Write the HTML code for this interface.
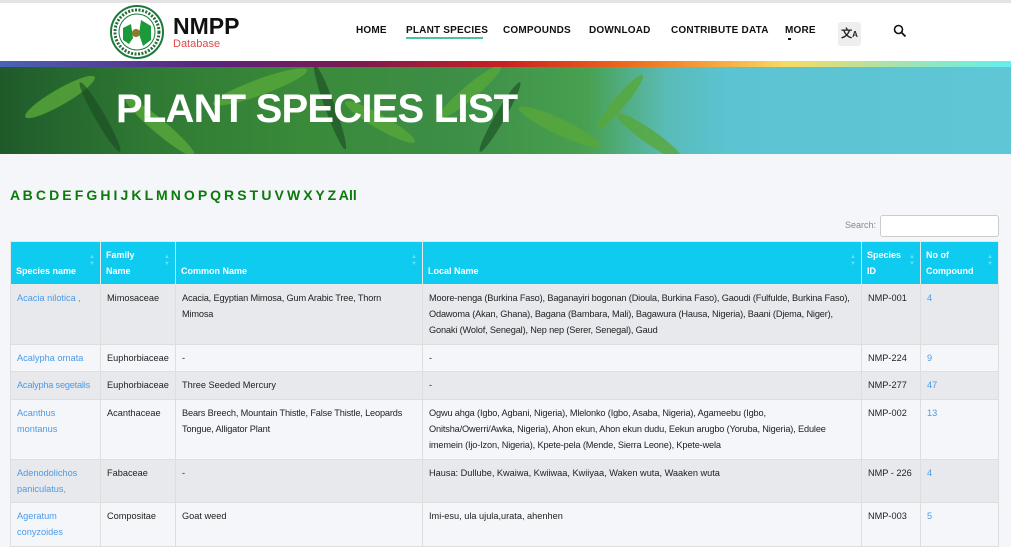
<!DOCTYPE html>
<html><head><meta charset="utf-8"><style>
*{margin:0;padding:0;box-sizing:border-box}
body{width:1011px;height:544px;overflow:hidden;background:#f5f6fa;font-family:"Liberation Sans",sans-serif;position:relative}
.hdr{position:absolute;left:0;top:0;width:1011px;height:61px;background:#fff;border-top:3px solid #e4e4e4}
.bar{position:absolute;left:0;top:61px;width:1011px;height:6px;background:linear-gradient(90deg,#4a63b8,#5a2480 20%,#7a1a50 35%,#cc2020 50%,#ee6a1c 62%,#f6b040 72%,#f7dc62 78%,#a9e3a8 88%,#5ff0f0)}
.nav{position:absolute;top:25px;font-size:10px;font-weight:bold;color:#111;letter-spacing:.2px}
.banner{position:absolute;left:0;top:67px;width:1011px;height:87px;background:linear-gradient(90deg,#1f5a2a 0%,#2f7a34 15%,#3a8a3a 30%,#3d8e46 45%,#48a050 58%,#5abcb8 66%,#5bc3d2 72%,#5ec6d4 100%);overflow:hidden}
.banner h1{position:absolute;left:116px;top:20px;color:#fff;font-size:40px;font-weight:900;letter-spacing:-0.8px;font-family:"Liberation Sans",sans-serif;white-space:nowrap}
.alpha{position:absolute;left:10px;top:187px;font-size:14px;font-weight:bold;color:#0b7a0b;letter-spacing:.1px;word-spacing:-1px}
table{position:absolute;left:10px;top:241px;width:988px;border-collapse:collapse;table-layout:fixed;font-size:9.2px;line-height:16px;color:#222}
th{background:#0ecbef;color:#fff;text-align:left;vertical-align:bottom;padding:0 5px 5px;border:1px solid #e8e8e8;font-size:9px;position:relative;line-height:16px}
th:after{content:"▲\A▼";white-space:pre;position:absolute;right:5px;top:12px;font-size:6px;line-height:7px;color:#6fdcf3}
td{vertical-align:top;padding:5px 6px 0;border:1px solid #dedede;overflow:hidden}
td.n{white-space:nowrap;letter-spacing:-0.15px}
tr.o td{background:#e8e9ed}tr.e td{background:#f5f6fa}
a{color:#4a9ae8;text-decoration:none}
</style></head><body>
<div class="hdr"></div>
<svg style="position:absolute;left:109px;top:4px" width="56" height="56" viewBox="0 0 56 56"><circle cx="28" cy="28" r="26" fill="#fff" stroke="#1a7a3a" stroke-width="2"/><circle cx="28" cy="28" r="18" fill="#fff" stroke="#1a7a3a" stroke-width="1"/><path d="M14 24 L22 20 L24 34 L20 40 L14 36Z" fill="#1a9a3a"/><path d="M32 16 L42 22 L42 36 L34 42 L30 30Z" fill="#1a9a3a"/><circle cx="27" cy="29" r="4" fill="#8a7a2a"/><circle cx="28" cy="28" r="22" fill="none" stroke="#2a6a3a" stroke-width="3" stroke-dasharray="2 1.5"/></svg>
<div style="position:absolute;left:173px;top:13px;font-size:23px;font-weight:bold;color:#111">NMPP</div>
<div style="position:absolute;left:173px;top:38px;font-size:11px;color:#e04a4a">Database</div>
<div class="nav" style="left:356px">HOME</div>
<div class="nav" style="left:406px">PLANT SPECIES</div>
<div style="position:absolute;left:406px;top:37px;width:77px;height:2px;background:#4cc29a"></div>
<div class="nav" style="left:503px">COMPOUNDS</div>
<div class="nav" style="left:589px">DOWNLOAD</div>
<div class="nav" style="left:671px">CONTRIBUTE DATA</div>
<div class="nav" style="left:785px">MORE</div>
<div style="position:absolute;left:788px;top:38px;width:3px;height:2px;background:#111"></div>
<div style="position:absolute;left:838px;top:22px;width:23px;height:24px;background:#eee;border-radius:3px;font-size:11px;font-weight:bold;text-align:center;line-height:24px;color:#222">文<span style="font-size:8px">A</span></div>
<svg style="position:absolute;left:893px;top:24px" width="14" height="14" viewBox="0 0 14 14"><circle cx="5.5" cy="5.5" r="4" fill="none" stroke="#111" stroke-width="1.6"/><path d="M8.5 8.5 L12.5 12.5" stroke="#111" stroke-width="1.8"/></svg>
<div class="bar"></div>
<div class="banner">
<svg width="720" height="87" style="position:absolute;left:0;top:0"><g fill="#58a83a" opacity=".8"><ellipse cx="60" cy="30" rx="40" ry="8" transform="rotate(-30 60 30)"/><ellipse cx="160" cy="60" rx="45" ry="7" transform="rotate(40 160 60)"/><ellipse cx="260" cy="20" rx="50" ry="8" transform="rotate(-20 260 20)"/><ellipse cx="380" cy="55" rx="40" ry="7" transform="rotate(30 380 55)"/><ellipse cx="470" cy="25" rx="40" ry="7" transform="rotate(-40 470 25)"/><ellipse cx="560" cy="60" rx="45" ry="8" transform="rotate(25 560 60)"/><ellipse cx="620" cy="35" rx="35" ry="6" transform="rotate(-50 620 35)"/><ellipse cx="650" cy="70" rx="40" ry="7" transform="rotate(35 650 70)"/></g><g fill="#1a4a22" opacity=".6"><ellipse cx="100" cy="50" rx="40" ry="5" transform="rotate(60 100 50)"/><ellipse cx="330" cy="40" rx="45" ry="5" transform="rotate(70 330 40)"/><ellipse cx="500" cy="50" rx="40" ry="5" transform="rotate(-60 500 50)"/></g></svg>
<h1>PLANT SPECIES LIST</h1></div>
<div class="alpha">A B C D E F G H I J K L M N O P Q R S T U V W X Y Z All</div>
<div style="position:absolute;left:845px;top:220px;font-size:9px;color:#888">Search:</div>
<div style="position:absolute;left:880px;top:215px;width:119px;height:22px;background:#fff;border:1px solid #ccc;border-radius:3px"></div>
<table>
<colgroup><col style="width:90px"><col style="width:75px"><col style="width:247px"><col style="width:439px"><col style="width:59px"><col style="width:78px"></colgroup>
<tr style="height:43px"><th>Species name</th><th>Family<br>Name</th><th>Common Name</th><th>Local Name</th><th>Species<br>ID</th><th>No of<br>Compound</th></tr>
<tr class="o" style="height:60px"><td><a>Acacia nilotica ,</a></td><td>Mimosaceae</td><td class="n">Acacia, Egyptian Mimosa, Gum Arabic Tree, Thorn<br>Mimosa</td><td class="n">Moore-nenga (Burkina Faso), Baganayiri bogonan (Dioula, Burkina Faso), Gaoudi (Fulfulde, Burkina Faso),<br>Odawoma (Akan, Ghana), Bagana (Bambara, Mali), Bagawura (Hausa, Nigeria), Baani (Djema, Niger),<br>Gonaki (Wolof, Senegal), Nep nep (Serer, Senegal), Gaud</td><td>NMP-001</td><td><a>4</a></td></tr>
<tr class="e" style="height:27px"><td><a>Acalypha ornata</a></td><td>Euphorbiaceae</td><td>-</td><td>-</td><td>NMP-224</td><td><a>9</a></td></tr>
<tr class="o" style="height:28px"><td style="white-space:nowrap;letter-spacing:-0.2px"><a>Acalypha segetalis</a></td><td>Euphorbiaceae</td><td>Three Seeded Mercury</td><td>-</td><td>NMP-277</td><td><a>47</a></td></tr>
<tr class="e" style="height:60px"><td><a>Acanthus<br>montanus</a></td><td>Acanthaceae</td><td class="n">Bears Breech, Mountain Thistle, False Thistle, Leopards<br>Tongue, Alligator Plant</td><td class="n">Ogwu ahga (Igbo, Agbani, Nigeria), Mlelonko (Igbo, Asaba, Nigeria), Agameebu (Igbo,<br>Onitsha/Owerri/Awka, Nigeria), Ahon ekun, Ahon ekun dudu, Eekun arugbo (Yoruba, Nigeria), Edulee<br>imemein (Ijo-Izon, Nigeria), Kpete-pela (Mende, Sierra Leone), Kpete-wela</td><td>NMP-002</td><td><a>13</a></td></tr>
<tr class="o" style="height:43px"><td><a>Adenodolichos<br>paniculatus,</a></td><td>Fabaceae</td><td>-</td><td>Hausa: Dullube, Kwaiwa, Kwiiwaa, Kwiiyaa, Waken wuta, Waaken wuta</td><td>NMP - 226</td><td><a>4</a></td></tr>
<tr class="e" style="height:44px"><td><a>Ageratum<br>conyzoides</a></td><td>Compositae</td><td>Goat weed</td><td>Imi-esu, ula ujula,urata, ahenhen</td><td>NMP-003</td><td><a>5</a></td></tr>
</table>
</body></html>
